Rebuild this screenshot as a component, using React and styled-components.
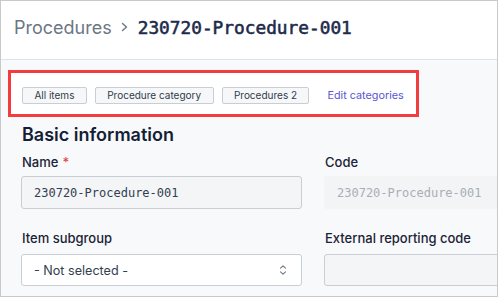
import React from "react";
import styled, { createGlobalStyle } from "styled-components";

const Global = createGlobalStyle`
  html, body { margin: 0; padding: 0; background: #ffffff; }
  * { box-sizing: border-box; }
`;

const Frame = styled.div`
  width: 498px;
  height: 297px;
  border: 1px solid #c9c9c9;
  overflow: hidden;
  display: flex;
  flex-direction: column;
  font-family: Inter, "Noto Sans", sans-serif;
  background: #f8f9fa;
`;

const Header = styled.header`
  flex: 0 0 59px;
  display: flex;
  align-items: baseline;
  padding: 13px 13px 0;
  background: #ffffff;
  border-bottom: 1px solid #dfe2e6;
  line-height: 28px;
`;

const Crumb = styled.span`
  font-size: 18px;
  color: #6b7684;
  font-weight: 400;
`;

const Chevron = styled.svg`
  width: 9px;
  height: 12px;
  margin: 7px 9px 0 8px;
  align-self: flex-start;
`;

const Title = styled.h1`
  margin: 0;
  font-family: "DejaVu Sans Mono", "Liberation Mono", monospace;
  font-size: 17.8px;
  font-weight: 400;
  -webkit-text-stroke: 0.55px #1d2a4b;
  color: #1d2a4b;
`;

const Body = styled.main`
  flex: 1;
  padding: 10px 0 0 7px;
`;

const ChipBar = styled.nav`
  width: 411px;
  height: 47px;
  border: 3px solid #f23c3e;
  background: #ffffff;
  display: flex;
  align-items: flex-start;
  padding: 14px 0 0 11px;
  gap: 8px;
`;

const Chip = styled.button`
  height: 17px;
  padding: 0 11.4px;
  border: 1px solid #c9ced5;
  border-radius: 2px;
  background: #f6f7f8;
  color: #2f3b4d;
  font-family: Inter, sans-serif;
  font-size: 10px;
  line-height: 15px;
  white-space: nowrap;
`;

const LinkButton = styled.a`
  margin-left: 10px;
  font-size: 10.8px;
  line-height: 17px;
  color: #5856d6;
  white-space: nowrap;
`;

const Section = styled.section`
  padding: 6px 0 0 13px;
`;

const SectionTitle = styled.h2`
  margin: 0 0 7px;
  font-size: 18px;
  line-height: 24px;
  font-weight: 600;
  color: #141e36;
  padding-left: 1px;
`;

const Grid = styled.div`
  display: grid;
  grid-template-columns: 281px 281px;
  column-gap: 22px;
  row-gap: 21px;
`;

const Field = styled.div`
  display: flex;
  flex-direction: column;
  gap: ${(p) => p.$gap || 6}px;
`;

const Label = styled.label`
  font-size: 13px;
  line-height: 16px;
  font-weight: 500;
  color: #1a2337;
  padding-left: 1px;
`;

const Required = styled.span`
  color: #e5484d;
  margin-left: 4px;
`;

const Input = styled.div`
  height: ${(p) => p.$h || 33}px;
  border: 1px solid ${(p) => (p.$borderless ? "#f2f4f6" : "#c9ced5")};
  border-radius: 3px;
  background: ${(p) => (p.$white ? "#ffffff" : p.$borderless ? "#f2f4f6" : "#f4f5f7")};
  display: flex;
  align-items: center;
  padding: 0 12px;
  font-family: ${(p) => (p.$mono ? `"DejaVu Sans Mono", "Liberation Mono", monospace` : `Inter, sans-serif`)};
  font-size: ${(p) => (p.$mono ? 12 : 12.6)}px;
  color: ${(p) => (p.$muted ? "#a9aeb6" : "#333e4f")};
  justify-content: space-between;
  white-space: nowrap;
`;

const UpDown = styled.svg`
  width: 8px;
  height: 12px;
  margin-right: 2px;
`;

export default function App() {
  return (
    <>
      <Global />
      <Frame>
        <Header>
          <Crumb>Procedures</Crumb>
          <Chevron viewBox="0 0 9 12">
            <path d="M2.5 2.5 L6.5 6 L2.5 9.5" fill="none" stroke="#6b7684" strokeWidth="1.4" strokeLinecap="round" strokeLinejoin="round" />
          </Chevron>
          <Title>230720-Procedure-001</Title>
        </Header>
        <Body>
          <ChipBar>
            <Chip>All items</Chip>
            <Chip>Procedure category</Chip>
            <Chip>Procedures 2</Chip>
            <LinkButton>Edit categories</LinkButton>
          </ChipBar>
          <Section>
            <SectionTitle>Basic information</SectionTitle>
            <Grid>
              <Field>
                <Label>
                  Name<Required>*</Required>
                </Label>
                <Input $mono>230720-Procedure-001</Input>
              </Field>
              <Field>
                <Label>Code</Label>
                <Input $mono $muted $borderless>230720-Procedure-001</Input>
              </Field>
              <Field $gap={8}>
                <Label>Item subgroup</Label>
                <Input $white $h={32}>
                  <span>- Not selected -</span>
                  <UpDown viewBox="0 0 8 12">
                    <path d="M1.5 4.2 L4 1.8 L6.5 4.2" fill="none" stroke="#6f7885" strokeWidth="1.1" strokeLinecap="round" strokeLinejoin="round" />
                    <path d="M1.5 7.8 L4 10.2 L6.5 7.8" fill="none" stroke="#6f7885" strokeWidth="1.1" strokeLinecap="round" strokeLinejoin="round" />
                  </UpDown>
                </Input>
              </Field>
              <Field $gap={8}>
                <Label>External reporting code</Label>
                <Input $h={32}></Input>
              </Field>
            </Grid>
          </Section>
        </Body>
      </Frame>
    </>
  );
}
